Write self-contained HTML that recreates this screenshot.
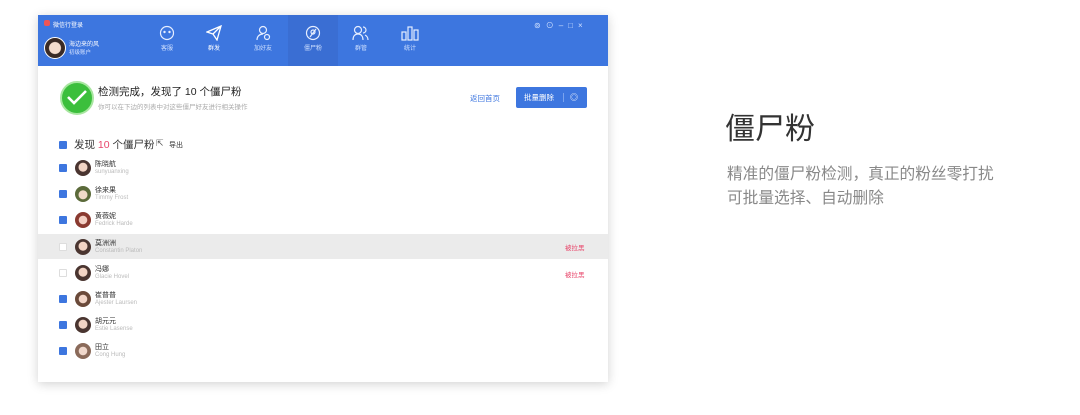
<!DOCTYPE html><html><head><meta charset="utf-8"><style>
body{margin:0;width:1080px;height:415px;background:#fff;font-family:"Liberation Sans","Noto Sans CJK SC",sans-serif;position:relative;overflow:hidden}
.win{position:absolute;left:38px;top:15px;width:570px;height:367px;background:#fff;box-shadow:0 2px 10px rgba(0,0,0,.18)}
.hd{position:absolute;left:0;top:0;width:570px;height:51px;background:#3d76df}
.t{position:absolute;white-space:nowrap}
.nav{position:absolute;top:0;width:50px;height:51px;text-align:center;color:#cfe0ff;font-size:6px}
.nav svg{display:block;margin:10px auto 2px}
.row{position:absolute;left:0;width:570px;height:26px}
.cb{position:absolute;left:21px;top:9px;width:8px;height:8px;border-radius:1px;background:#3d76df}
.cb.e{background:#fff;border:1px solid #ddd;width:6px;height:6px}
.av{position:absolute;left:37px;top:5px;width:16px;height:16px;border-radius:50%;background:radial-gradient(circle at 50% 45%,#f3d4c4 35%,#4a3530 40%)}
.nm{position:absolute;left:57px;top:4px;font-size:7px;color:#333}
.sb{position:absolute;left:57px;top:14px;font-size:6px;color:#bbb}
</style></head><body>
<div class="win">
<div class="hd">
<div class="t" style="left:6px;top:5px;width:6px;height:6px;background:#e55;border-radius:2px"></div>
<div class="t" style="left:15px;top:5px;font-size:6px;color:#fff">微信行登录</div>
<div class="t" style="left:6px;top:22px;width:20px;height:20px;border-radius:50%;background:radial-gradient(circle at 50% 50%,#f5dccd 40%,#3a2a25 45%);border:1px solid #fff"></div>
<div class="t" style="left:31px;top:24px;font-size:6px;color:#fff">海边来的风</div>
<div class="t" style="left:31px;top:33px;font-size:5.5px;color:#d6e3ff">初级账户</div>
<div class="nav" style="left:104px"><svg width="16" height="16" viewBox="0 0 16 16" fill="none" stroke="#e6eeff" stroke-width="1.2"><circle cx="8" cy="8" r="6.5"/><circle cx="5.5" cy="7" r=".6"/><circle cx="10.5" cy="7" r=".6"/></svg>客服</div>
<div class="nav" style="left:151px;color:#fff"><svg width="16" height="16" viewBox="0 0 16 16" fill="none" stroke="#fff" stroke-width="1.3"><path d="M1 7 15 1 11 15 7 9Z M7 9 15 1"/></svg>群发</div>
<div class="nav" style="left:200px"><svg width="16" height="16" viewBox="0 0 16 16" fill="none" stroke="#e6eeff" stroke-width="1.2"><circle cx="8" cy="5" r="3.5"/><path d="M2 15c0-4 3-6 6-6"/><circle cx="12" cy="12" r="2.5"/></svg>加好友</div>
<div class="nav" style="left:250px;background:#3a6ed3"><svg width="16" height="16" viewBox="0 0 16 16" fill="none" stroke="#e6eeff" stroke-width="1.2"><circle cx="8" cy="8" r="6.5"/><path d="M5 12 11 4"/><circle cx="8" cy="7" r="2"/></svg>僵尸粉</div>
<div class="nav" style="left:298px"><svg width="18" height="16" viewBox="0 0 18 16" fill="none" stroke="#e6eeff" stroke-width="1.2"><circle cx="6" cy="5" r="3.5"/><path d="M1 15c0-4 2-6 5-6s5 2 5 6M11 2a3 3 0 0 1 0 6M13 10c2 1 3 3 3 5"/></svg>群管</div>
<div class="nav" style="left:347px"><svg width="18" height="16" viewBox="0 0 18 16" fill="none" stroke="#e6eeff" stroke-width="1.2"><rect x="1" y="7" width="4" height="8"/><rect x="7" y="2" width="4" height="13"/><rect x="13" y="5" width="4" height="10"/></svg>统计</div>
<div class="t" style="left:496px;top:5px;font-size:8px;color:#cfe0ff;letter-spacing:5px">⊚⊙–□×</div>
</div>
<div class="t" style="left:22px;top:66px;width:30px;height:30px;border-radius:50%;background:#3cbf3c;border:2px solid #a8e6a0"></div>
<svg class="t" style="left:28px;top:74px" width="22" height="16" viewBox="0 0 22 16"><path d="M2 8 8 14 20 2" fill="none" stroke="#fff" stroke-width="2.6"/></svg>
<div class="t" style="left:60px;top:69px;font-size:10.5px;color:#222">检测完成，发现了 10 个僵尸粉</div>
<div class="t" style="left:60px;top:86px;font-size:6.5px;color:#aaa">你可以在下边的列表中对这些僵尸好友进行相关操作</div>
<div class="t" style="left:432px;top:78px;font-size:7.5px;color:#3d76df">返回首页</div>
<div class="t" style="left:478px;top:72px;width:71px;height:21px;background:#3d76df;border-radius:2px;color:#fff;font-size:7.5px;line-height:21px;padding-left:8px;box-sizing:border-box">批量删除<span style="position:absolute;left:47px;top:6px;height:9px;border-left:1px solid #7aa3ee"></span><span style="position:absolute;left:54px;font-size:8px">◎</span></div>
<div class="t" style="left:21px;top:126px;width:8px;height:8px;background:#3d76df;border-radius:1px"></div>
<div class="t" style="left:36px;top:122px;font-size:10.5px;color:#333">发现 <span style="color:#e8456a">10</span> 个僵尸粉</div>
<div class="t" style="left:118px;top:123px;font-size:9px;color:#555">⇱</div>
<div class="t" style="left:131px;top:125px;font-size:7px;color:#333">导出</div>
<div class="row" style="top:140px"><div class="cb"></div><div class="av"></div><div class="nm">陈晓航</div><div class="sb">sunyuanxing</div></div>
<div class="row" style="top:166px"><div class="cb"></div><div class="av" style="background:radial-gradient(circle at 50% 55%,#f0dac8 35%,#5b6a3a 40%)"></div><div class="nm">徐来果</div><div class="sb">Timmy Frost</div></div>
<div class="row" style="top:192px"><div class="cb"></div><div class="av" style="background:radial-gradient(circle at 50% 50%,#f4d0c4 35%,#8a3a30 40%)"></div><div class="nm">黄薇妮</div><div class="sb">Fedrick Harde</div></div>
<div class="row" style="top:219px;background:#ebebeb;height:25px"><div class="cb e"></div><div class="av"></div><div class="nm">莫洲洲</div><div class="sb">Constantin Platon</div><div class="t" style="left:527px;top:8px;font-size:6.5px;color:#e8456a">被拉黑</div></div>
<div class="row" style="top:245px"><div class="cb e"></div><div class="av"></div><div class="nm">冯娜</div><div class="sb">Glacie Hovel</div><div class="t" style="left:527px;top:9px;font-size:6.5px;color:#e8456a">被拉黑</div></div>
<div class="row" style="top:271px"><div class="cb"></div><div class="av" style="background:radial-gradient(circle at 50% 50%,#f2d6c8 35%,#6a4a3a 40%)"></div><div class="nm">崔普普</div><div class="sb">Ajester Laursen</div></div>
<div class="row" style="top:297px"><div class="cb"></div><div class="av"></div><div class="nm">胡元元</div><div class="sb">Estie Lasense</div></div>
<div class="row" style="top:323px"><div class="cb"></div><div class="av" style="background:radial-gradient(circle at 50% 50%,#f0d8cc 35%,#8a6a5a 40%)"></div><div class="nm">田立</div><div class="sb">Cong Hung</div></div>
</div>
<div class="t" style="left:725px;top:104px;font-size:30px;color:#333">僵尸粉</div>
<div class="t" style="left:727px;top:161px;font-size:15.7px;color:#888">精准的僵尸粉检测，真正的粉丝零打扰</div>
<div class="t" style="left:727px;top:185px;font-size:15.7px;color:#888">可批量选择、自动删除</div>
</body></html>
